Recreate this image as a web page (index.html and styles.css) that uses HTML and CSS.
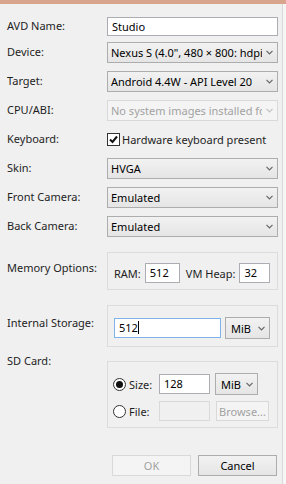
FILE: index.html
```html
<!DOCTYPE html>
<html lang="en">
<head>
    <meta charset="UTF-8">
    <meta name="viewport" content="width=device-width, initial-scale=1.0">
    <title>Create new Android Virtual Device (AVD)</title>
    <link rel="stylesheet" href="styles.css">
</head>
<body>
    <div class="titlebar"></div>

    <div class="window">
        <div class="form">
            <div class="row row-first">
                <div class="lbl">AVD Name:</div>
                <div class="field"><div class="input">Studio</div></div>
            </div>

            <div class="row">
                <div class="lbl">Device:</div>
                <div class="field">
                    <div class="combo">
                        <span class="combo-text">Nexus S (4.0", 480 × 800: hdpi)</span>
                        <svg class="chev" width="7" height="5" viewBox="0 0 7 5"><polyline points="0.5,0.8 3.5,3.8 6.5,0.8" /></svg>
                    </div>
                </div>
            </div>

            <div class="row">
                <div class="lbl">Target:</div>
                <div class="field">
                    <div class="combo">
                        <span class="combo-text">Android 4.4W - API Level 20</span>
                        <svg class="chev" width="7" height="5" viewBox="0 0 7 5"><polyline points="0.5,0.8 3.5,3.8 6.5,0.8" /></svg>
                    </div>
                </div>
            </div>

            <div class="row">
                <div class="lbl">CPU/ABI:</div>
                <div class="field">
                    <div class="combo combo-disabled">
                        <span class="combo-text">No system images installed for this target.</span>
                        <svg class="chev" width="7" height="5" viewBox="0 0 7 5"><polyline points="0.5,0.8 3.5,3.8 6.5,0.8" /></svg>
                    </div>
                </div>
            </div>

            <div class="row">
                <div class="lbl">Keyboard:</div>
                <div class="field check-field">
                    <span class="checkbox">
                        <svg width="9" height="9" viewBox="0 0 9 9"><polyline points="1,4.5 3.5,7 8,1.5" /></svg>
                    </span>
                    <span>Hardware keyboard present</span>
                </div>
            </div>

            <div class="row">
                <div class="lbl">Skin:</div>
                <div class="field">
                    <div class="combo">
                        <span class="combo-text">HVGA</span>
                        <svg class="chev" width="7" height="5" viewBox="0 0 7 5"><polyline points="0.5,0.8 3.5,3.8 6.5,0.8" /></svg>
                    </div>
                </div>
            </div>

            <div class="row">
                <div class="lbl">Front Camera:</div>
                <div class="field">
                    <div class="combo">
                        <span class="combo-text">Emulated</span>
                        <svg class="chev" width="7" height="5" viewBox="0 0 7 5"><polyline points="0.5,0.8 3.5,3.8 6.5,0.8" /></svg>
                    </div>
                </div>
            </div>

            <div class="row">
                <div class="lbl">Back Camera:</div>
                <div class="field">
                    <div class="combo">
                        <span class="combo-text">Emulated</span>
                        <svg class="chev" width="7" height="5" viewBox="0 0 7 5"><polyline points="0.5,0.8 3.5,3.8 6.5,0.8" /></svg>
                    </div>
                </div>
            </div>

            <!-- grouped options -->
            <div class="group-row memory-row">
                <div class="lbl memory-lbl">Memory Options:</div>
                <div class="group memory-group">
                    <span>RAM:</span>
                    <div class="input ram-input">512</div>
                    <span class="heap-lbl">VM Heap:</span>
                    <div class="input heap-input">32</div>
                </div>
            </div>

            <div class="group-row storage-row">
                <div class="lbl storage-lbl">Internal Storage:</div>
                <div class="group storage-group">
                    <div class="input input-focus storage-input">512<span class="caret"></span></div>
                    <div class="combo unit-combo">
                        <span class="combo-text">MiB</span>
                        <svg class="chev" width="7" height="5" viewBox="0 0 7 5"><polyline points="0.5,0.8 3.5,3.8 6.5,0.8" /></svg>
                    </div>
                </div>
            </div>

            <div class="group-row sd-row">
                <div class="lbl">SD Card:</div>
                <div class="group sd-group">
                    <div class="sd-line sd-line-size">
                        <div class="radio-lbl"><span class="radio radio-on"></span>Size:</div>
                        <div class="input sd-input">128</div>
                        <div class="combo unit-combo sd-unit">
                            <span class="combo-text">MiB</span>
                            <svg class="chev" width="7" height="5" viewBox="0 0 7 5"><polyline points="0.5,0.8 3.5,3.8 6.5,0.8" /></svg>
                        </div>
                    </div>
                    <div class="sd-line">
                        <div class="radio-lbl"><span class="radio"></span>File:</div>
                        <div class="input input-disabled sd-input"></div>
                        <div class="btn btn-disabled browse-btn">Browse...</div>
                    </div>
                </div>
            </div>

            <div class="buttons">
                <div class="btn btn-disabled">OK</div>
                <div class="btn">Cancel</div>
            </div>
        </div>
    </div>
</body>
</html>
```

FILE: styles.css
```css
body {
    margin: 0;
    background: #f6f6f6;
    font-family: "Noto Sans", "Liberation Sans", sans-serif;
    font-size: 11px;
    color: #1e1e1e;
}

.titlebar {
    height: 4px;
    background: #d8a48b;
}

.window {
    width: 283px;
    height: 480px;
    background: #f0f0f0;
    border-right: 1px solid #d9d9d9;
    box-sizing: border-box;
}

.form {
    padding: 11px 0 0 7px;
}

/* plain label + control rows */
.row {
    display: flex;
    align-items: center;
    height: 22px;
    margin-bottom: 7px;
}

.row-first {
    margin-bottom: 4px;
}

.lbl {
    width: 100px;
    flex-shrink: 0;
    white-space: nowrap;
    line-height: 16px;
}

.field {
    width: 171px;
}

.input {
    height: 19px;
    line-height: 17px;
    background: #fff;
    border: 1px solid #abadb3;
    box-sizing: border-box;
    padding: 0 4px;
    color: #000;
    white-space: nowrap;
    overflow: hidden;
}

.input-focus {
    border-color: #7eb4ea;
}

.input-disabled {
    background: #f0f0f0;
    border-color: #d9d9d9;
}

.caret {
    display: inline-block;
    width: 1px;
    height: 13px;
    background: #000;
    vertical-align: -2px;
}

.combo {
    height: 21px;
    display: flex;
    align-items: center;
    justify-content: space-between;
    border: 1px solid #adadad;
    background: linear-gradient(#f2f2f2, #e5e5e5);
    box-sizing: border-box;
    padding: 0 3px 0 3px;
    color: #000;
}

.combo-text {
    white-space: nowrap;
    overflow: hidden;
    flex: 1;
}

.chev {
    flex-shrink: 0;
    margin-left: 4px;
    margin-right: 1px;
}

.chev polyline {
    fill: none;
    stroke: #666;
    stroke-width: 1.2;
}

.combo-disabled {
    background: #f4f4f4;
    border-color: #d9d9d9;
    color: #a2a2a2;
}

.combo-disabled .chev polyline {
    stroke: #c2c2c2;
}

/* checkbox */
.check-field {
    display: flex;
    align-items: center;
    gap: 2px;
}

.checkbox {
    width: 13px;
    height: 13px;
    border: 1px solid #333;
    background: #fff;
    box-sizing: border-box;
    display: flex;
    align-items: center;
    justify-content: center;
}

.checkbox polyline {
    fill: none;
    stroke: #111;
    stroke-width: 2;
}

/* group boxes */
.group-row {
    display: flex;
    align-items: flex-start;
}

.group {
    width: 171px;
    border: 1px solid #dcdcdc;
    box-sizing: border-box;
    display: flex;
}

.memory-row {
    margin-top: 15px; /* collapses with the row margin above */
}

.memory-lbl {
    margin-top: 8px;
}

.memory-group {
    align-items: center;
    padding: 10px 6px 6px 6px;
    gap: 4px;
}

.ram-input {
    width: 35px;
    height: 20px;
    line-height: 18px;
}

.heap-lbl {
    margin-left: 2px;
}

.heap-input {
    width: 31px;
    height: 20px;
    line-height: 18px;
}

.storage-row {
    margin-top: 15px;
}

.storage-lbl {
    margin-top: 10px;
}

.storage-group {
    align-items: center;
    padding: 11px 7px 7px 6px;
    gap: 4px;
}

.storage-input {
    width: 107px;
    height: 20px;
    line-height: 18px;
}

.unit-combo {
    width: 45px;
    height: 22px;
    padding-left: 5px;
}

.sd-row {
    margin-top: 6px;
}

.sd-group {
    flex-direction: column;
    margin-top: 8px;
    padding: 11px 0 6px 5px;
    gap: 6px;
}

.sd-line {
    display: flex;
    align-items: center;
    gap: 5px;
    height: 20px;
}

.sd-line-size {
    height: 22px;
}

.radio-lbl {
    width: 41px;
    display: flex;
    align-items: center;
    gap: 3px;
}

.radio {
    width: 13px;
    height: 13px;
    border: 1px solid #333;
    border-radius: 50%;
    background: #fff;
    box-sizing: border-box;
    display: flex;
    align-items: center;
    justify-content: center;
}

.radio-on::after {
    content: "";
    width: 7px;
    height: 7px;
    border-radius: 50%;
    background: #111;
}

.sd-input {
    width: 51px;
    height: 20px;
    line-height: 18px;
}

.sd-unit {
    width: 43px;
}

/* buttons */
.btn {
    height: 21px;
    width: 79px;
    border: 1px solid #adadad;
    background: linear-gradient(#f2f2f2, #e5e5e5);
    box-sizing: border-box;
    display: flex;
    align-items: center;
    justify-content: center;
    color: #000;
}

.btn-disabled {
    background: #f4f4f4;
    border-color: #d9d9d9;
    color: #a2a2a2;
}

.browse-btn {
    width: 53px;
    height: 20px;
    margin-left: 1px;
}

.buttons {
    display: flex;
    justify-content: flex-end;
    gap: 7px;
    margin-top: 27px;
    width: 270px;
}
```
